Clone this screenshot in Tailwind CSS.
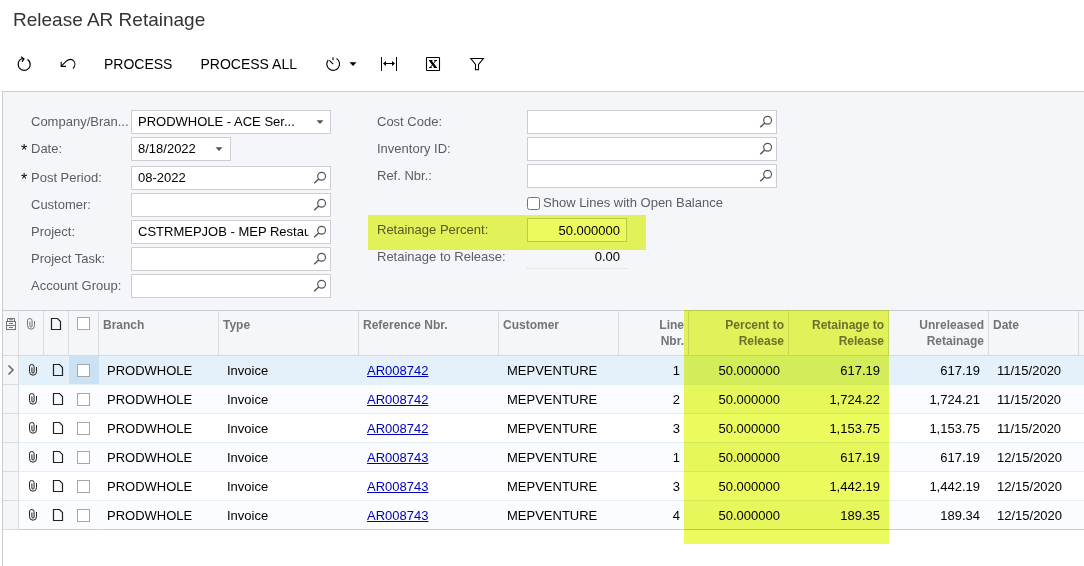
<!DOCTYPE html>
<html lang="en">
  <head>
    <meta charset="UTF-8" />
    <meta name="viewport" content="width=device-width, initial-scale=1.0" />
    <title>Release AR Retainage</title>
    <script src="https://cdn.jsdelivr.net/npm/@tailwindcss/browser@4"></script>
  </head>
  <body
    class="flex min-h-screen flex-col bg-white font-['Liberation_Sans',Arial,sans-serif] text-[13px] text-black"
  >
    <!-- Icons used more than once -->
    <svg class="hidden" aria-hidden="true">
      <symbol id="icon-search" viewBox="0 0 14 14">
        <circle cx="8.6" cy="5.2" r="3.9" fill="none" stroke="currentColor" stroke-width="1.2" />
        <path d="M5.700 8 1.200 12.200" fill="none" stroke="currentColor" stroke-width="1.5" />
      </symbol>
      <symbol id="icon-caret" viewBox="0 0 8 8">
        <path d="M.5 2.200h7L4 6z" fill="currentColor" />
      </symbol>
      <symbol id="icon-clip" viewBox="0 0 12 14">
        <path
          d="M2.500 3.500v5.200a3.500 3.500 0 0 0 7 0V4M2.500 3.800a2.300 2.300 0 0 1 4.600 0V9a1.100 1.100 0 0 1-2.200 0V4.500"
          fill="none"
          stroke="currentColor"
          stroke-width="1"
        />
      </symbol>
      <symbol id="icon-note" viewBox="0 0 12 14">
        <path d="M1.500 1.500h6l3 3v8h-9z" fill="none" stroke="currentColor" stroke-width="1.2" />
      </symbol>
    </svg>

    <header>
      <h1 class="px-[13px] pt-2 text-[19px] leading-6 text-[#333]">
        Release AR Retainage
      </h1>
      <div class="flex h-[59px] items-center gap-7 pt-[5px] pl-4 text-sm">
        <button type="button" aria-label="Refresh" class="h-4 w-4">
          <svg viewBox="0 0 16 16" class="h-4 w-4" fill="none" stroke="currentColor" stroke-width="1.2">
            <path d="M7.500 2.800H5.800C3.500 3.800 2.200 5.800 2.200 8.400a6 6 0 0 0 12 0c0-2-1-3.900-2.700-5" />
            <path d="M5 .7 8 2.800 6 5.800" />
          </svg>
        </button>
        <button type="button" aria-label="Undo" class="h-4 w-4">
          <svg viewBox="0 0 16 16" class="h-4 w-4" fill="none" stroke="currentColor" stroke-width="1.1">
            <path d="M1.200 10.200 6.400 5.200c2.200-2 5-2.200 7-.6 2.200 1.900 2 5.200-.4 8" />
            <path d="M1.200 5.700v4.700h4.800" />
          </svg>
        </button>
        <button type="button">PROCESS</button>
        <button type="button">PROCESS ALL</button>
        <button type="button" aria-label="Schedule" class="-mr-1 flex items-center gap-2">
          <svg viewBox="0 0 16 16" class="h-4 w-4" fill="none" stroke="currentColor" stroke-width="1.1">
            <path d="M8 1.200v3M11.500 2.500a6.400 6.400 0 1 1-8.200 1.300" />
            <path d="M4.300 4.300 8.200 8.200" />
          </svg>
          <svg class="h-2 w-2"><use href="#icon-caret" /></svg>
        </button>
        <button type="button" aria-label="Fit to screen" class="h-4 w-4">
          <svg viewBox="0 0 16 16" class="h-4 w-4" fill="none" stroke="currentColor" stroke-width="1">
            <path d="M.5 1v14M15.500 1v14M3 7.500h10" />
            <path d="M2 7.500 5 5v5zM14 7.500 11 5v5z" fill="currentColor" stroke="none" />
          </svg>
        </button>
        <button type="button" aria-label="Export to Excel" class="h-4 w-4">
          <svg viewBox="0 0 16 16" class="h-4 w-4" fill="none" stroke="currentColor">
            <rect x="1.500" y="1.500" width="13" height="13" rx=".5" stroke-width="1.100" />
            <path d="M5.300 4.600 10.500 11.500" stroke-width="2.200" />
            <path d="M10.800 4.600 5.200 11.500M4 4.500h3.500M9.200 4.500h2.800M4 11.500h2.800M8.800 11.500H12" stroke-width="1" />
          </svg>
        </button>
        <button type="button" aria-label="Filter" class="h-4 w-4">
          <svg viewBox="0 0 16 16" class="h-4 w-4" fill="none" stroke="currentColor" stroke-width="1.1">
            <path d="M1.800 2.500h12.600L9.500 8.500v5.200h-3V8.500z" />
          </svg>
        </button>
      </div>
    </header>

    <main class="ml-[2px] grow border-t border-l border-[#c9ccd1]">
      <form class="flex gap-[46px] bg-[#f5f6f9] pt-[18px] pb-3 pl-7 text-[#5c5c63]">
        <div class="flex w-[300px] flex-col gap-[3px]">
          <div class="flex">
            <label for="company" class="w-[100px] leading-6">Company/Bran...</label>
            <div class="relative w-[200px]">
              <select
                id="company"
                class="h-6 w-full appearance-none border border-[#ccced2] bg-white px-[6px] text-black"
              >
                <option>PRODWHOLE - ACE Ser...</option>
              </select>
              <svg class="pointer-events-none absolute top-2 right-[7px] h-2 w-2 text-[#555]">
                <use href="#icon-caret" />
              </svg>
            </div>
          </div>
          <div class="mb-[2px] flex">
            <label for="date" class="relative w-[100px] leading-6">
              <span class="absolute top-[2px] -left-[10px] text-base leading-6 text-black">*</span>Date:
            </label>
            <div class="flex h-6 w-[100px] items-center border border-[#ccced2] bg-white pr-[7px]">
              <input id="date" type="text" value="8/18/2022" class="min-w-0 grow px-[6px] text-black" />
              <button type="button" aria-label="Open calendar" class="text-[#555]">
                <svg class="h-2 w-2"><use href="#icon-caret" /></svg>
              </button>
            </div>
          </div>
          <div class="flex">
            <label for="period" class="relative w-[100px] leading-6">
              <span class="absolute top-[2px] -left-[10px] text-base leading-6 text-black">*</span>Post Period:
            </label>
            <div class="flex h-6 w-[200px] items-center border border-[#ccced2] bg-white pr-[3px]">
              <input id="period" type="text" value="08-2022" class="min-w-0 grow pl-[6px] text-black" />
              <button type="button" aria-label="Find period" class="pl-1 text-[#555]">
                <svg class="h-[14px] w-[14px]"><use href="#icon-search" /></svg>
              </button>
            </div>
          </div>
          <div class="flex">
            <label for="customer" class="w-[100px] leading-6">Customer:</label>
            <div class="flex h-6 w-[200px] items-center border border-[#ccced2] bg-white pr-[3px]">
              <input id="customer" type="text" class="min-w-0 grow pl-[6px] text-black" />
              <button type="button" aria-label="Find customer" class="pl-1 text-[#555]">
                <svg class="h-[14px] w-[14px]"><use href="#icon-search" /></svg>
              </button>
            </div>
          </div>
          <div class="flex">
            <label for="project" class="w-[100px] leading-6">Project:</label>
            <div class="flex h-6 w-[200px] items-center border border-[#ccced2] bg-white pr-[3px]">
              <input
                id="project"
                type="text"
                value="CSTRMEPJOB - MEP Restaurant"
                class="min-w-0 grow pl-[6px] text-black"
              />
              <button type="button" aria-label="Find project" class="pl-1 text-[#555]">
                <svg class="h-[14px] w-[14px]"><use href="#icon-search" /></svg>
              </button>
            </div>
          </div>
          <div class="flex">
            <label for="task" class="w-[100px] leading-6">Project Task:</label>
            <div class="flex h-6 w-[200px] items-center border border-[#ccced2] bg-white pr-[3px]">
              <input id="task" type="text" class="min-w-0 grow pl-[6px] text-black" />
              <button type="button" aria-label="Find task" class="pl-1 text-[#555]">
                <svg class="h-[14px] w-[14px]"><use href="#icon-search" /></svg>
              </button>
            </div>
          </div>
          <div class="flex">
            <label for="account" class="w-[100px] leading-6">Account Group:</label>
            <div class="flex h-6 w-[200px] items-center border border-[#ccced2] bg-white pr-[3px]">
              <input id="account" type="text" class="min-w-0 grow pl-[6px] text-black" />
              <button type="button" aria-label="Find account group" class="pl-1 text-[#555]">
                <svg class="h-[14px] w-[14px]"><use href="#icon-search" /></svg>
              </button>
            </div>
          </div>
        </div>

        <div class="flex w-[400px] flex-col gap-[3px]">
          <div class="flex">
            <label for="cost-code" class="w-[150px] leading-6">Cost Code:</label>
            <div class="flex h-6 w-[250px] items-center border border-[#ccced2] bg-white pr-[3px]">
              <input id="cost-code" type="text" class="min-w-0 grow pl-[6px] text-black" />
              <button type="button" aria-label="Find cost code" class="pl-1 text-[#555]">
                <svg class="h-[14px] w-[14px]"><use href="#icon-search" /></svg>
              </button>
            </div>
          </div>
          <div class="flex">
            <label for="inventory" class="w-[150px] leading-6">Inventory ID:</label>
            <div class="flex h-6 w-[250px] items-center border border-[#ccced2] bg-white pr-[3px]">
              <input id="inventory" type="text" class="min-w-0 grow pl-[6px] text-black" />
              <button type="button" aria-label="Find inventory item" class="pl-1 text-[#555]">
                <svg class="h-[14px] w-[14px]"><use href="#icon-search" /></svg>
              </button>
            </div>
          </div>
          <div class="flex">
            <label for="ref" class="w-[150px] leading-6">Ref. Nbr.:</label>
            <div class="flex h-6 w-[250px] items-center border border-[#ccced2] bg-white pr-[3px]">
              <input id="ref" type="text" class="min-w-0 grow pl-[6px] text-black" />
              <button type="button" aria-label="Find reference number" class="pl-1 text-[#555]">
                <svg class="h-[14px] w-[14px]"><use href="#icon-search" /></svg>
              </button>
            </div>
          </div>
          <label class="ml-[150px] flex h-6 items-center gap-[3px]">
            <input type="checkbox" class="h-[13px] w-[13px]" />
            Show Lines with Open Balance
          </label>
          <div class="relative flex">
            <label for="percent" class="w-[150px] leading-6">Retainage Percent:</label>
            <input
              id="percent"
              type="text"
              value="50.000000"
              class="h-6 w-[100px] border border-[#ccced2] bg-white px-[6px] text-right text-black"
            />
            <div
              class="pointer-events-none absolute -top-[3px] -left-[9px] h-[35px] w-[278px] bg-[#ebfa5c] mix-blend-multiply"
            ></div>
          </div>
          <div class="flex">
            <label for="to-release" class="w-[150px] leading-6">Retainage to Release:</label>
            <output
              id="to-release"
              class="h-6 w-[100px] border-b border-dotted border-[#d8dade] pr-[7px] text-right leading-6 text-black"
              >0.00</output
            >
          </div>
        </div>
      </form>

      <div class="relative">
        <table class="w-full table-fixed border-separate border-spacing-0">
          <colgroup>
            <col class="w-4" />
            <col class="w-[25px]" />
            <col class="w-[25px]" />
            <col class="w-[30px]" />
            <col class="w-[120px]" />
            <col class="w-[140px]" />
            <col class="w-[140px]" />
            <col class="w-[120px]" />
            <col class="w-[70px]" />
            <col class="w-[100px]" />
            <col class="w-[100px]" />
            <col class="w-[100px]" />
            <col class="w-[90px]" />
            <col />
          </colgroup>
          <thead
            class="bg-[#f5f6f9] text-left align-top text-xs leading-4 text-[#737378] [&_th]:h-[46px] [&_th]:border-t [&_th]:border-r [&_th]:border-b [&_th]:border-t-[#c9ccd1] [&_th]:border-r-[#d8dade] [&_th]:border-b-[#d8dade] [&_th]:pt-[6px] [&_th:last-child]:border-r-0"
          >
            <tr class="align-top">
              <th aria-label="Row settings">
                <svg viewBox="0 0 12 14" class="mx-auto h-[14px] w-3" fill="none" stroke="currentColor">
                  <path d="M2.500 4V1.500h7V4M1 4.500h10M1 8.500h10M1 12.500h10M1.500 4.500v8M10.500 4.500v8M4 6.500h4M4 10.500h4M4 2.800h4" />
                </svg>
              </th>
              <th aria-label="Files">
                <svg class="mx-auto h-[14px] w-3"><use href="#icon-clip" /></svg>
              </th>
              <th aria-label="Notes">
                <svg class="mx-auto h-[14px] w-3 text-[#222]"><use href="#icon-note" /></svg>
              </th>
              <th>
                <input
                  type="checkbox"
                  aria-label="Select all"
                  class="mx-auto block h-[13px] w-[13px] appearance-none border border-[#a5a7ab] bg-white"
                />
              </th>
              <th class="px-1">Branch</th>
              <th class="px-1">Type</th>
              <th class="px-1">Reference Nbr.</th>
              <th class="px-1">Customer</th>
              <th class="px-1 text-right">Line<br />Nbr.</th>
              <th class="px-1 text-right">Percent to<br />Release</th>
              <th class="px-1 text-right">Retainage to<br />Release</th>
              <th class="px-1 text-right">Unreleased<br />Retainage</th>
              <th class="px-1">Date</th>
              <th></th>
            </tr>
          </thead>
          <tbody id="lines"></tbody>
        </table>
        <!-- Marker over the percent and retainage columns -->
        <div
          class="pointer-events-none absolute top-0 -bottom-[14px] left-[681px] w-[205px] bg-[#ebfa5c] mix-blend-multiply"
        ></div>
      </div>
    </main>

    <script>
      const lines = [
        ["AR008742", 1, "617.19", "617.19", "11/15/2020"],
        ["AR008742", 2, "1,724.22", "1,724.21", "11/15/2020"],
        ["AR008742", 3, "1,153.75", "1,153.75", "11/15/2020"],
        ["AR008743", 1, "617.19", "617.19", "12/15/2020"],
        ["AR008743", 3, "1,442.19", "1,442.19", "12/15/2020"],
        ["AR008743", 4, "189.35", "189.34", "12/15/2020"],
      ];

      const arrow = `<svg viewBox="0 0 8 12" class="mx-auto h-3 w-2" fill="none" stroke="#666" stroke-width="1.5"><path d="M1.500 1.500 6 6l-4.500 4.500" /></svg>`;

      document.getElementById("lines").innerHTML = lines
        .map(([ref, nbr, release, unreleased, date], i) => {
          const active = i === 0;
          const last = i === lines.length - 1;
          const rowBg = active ? "bg-[#e4f1fa]" : i % 2 ? "bg-[#fafcff]" : "bg-white";
          const border = last ? "border-[#c9ccd1]" : "border-[#e2eff5]";
          const iconCell = `h-[29px] border-b ${border}`;
          const cell = `${iconCell} pt-[2px]`;
          return `
            <tr class="${rowBg}">
              <td class="h-[29px] border-r border-b border-[#d8dade] bg-[#f5f6f9]">${active ? arrow : ""}</td>
              <td class="${iconCell}"><svg class="ml-2 h-[14px] w-3 text-[#222]"><use href="#icon-clip" /></svg></td>
              <td class="${iconCell}"><svg class="ml-2 h-[14px] w-3 text-[#222]"><use href="#icon-note" /></svg></td>
              <td class="${iconCell} border-r border-r-transparent ${active ? "bg-[#cbe2f5]" : ""}">
                <input type="checkbox" aria-label="Select line ${i + 1}" class="mx-auto block h-[13px] w-[13px] appearance-none border border-[#a5a7ab] bg-white" />
              </td>
              <td class="${cell} px-2">PRODWHOLE</td>
              <td class="${cell} px-2">Invoice</td>
              <td class="${cell} px-2"><a href="#" class="text-[#0000b8] underline">${ref}</a></td>
              <td class="${cell} px-2">MEPVENTURE</td>
              <td class="${cell} pr-[9px] text-right">${nbr}</td>
              <td class="${cell} pr-[9px] text-right">50.000000</td>
              <td class="${cell} pr-[9px] text-right">${release}</td>
              <td class="${cell} pr-[9px] text-right">${unreleased}</td>
              <td class="${cell} px-2">${date}</td>
              <td class="${cell}"></td>
            </tr>`;
        })
        .join("");
    </script>
  </body>
</html>
